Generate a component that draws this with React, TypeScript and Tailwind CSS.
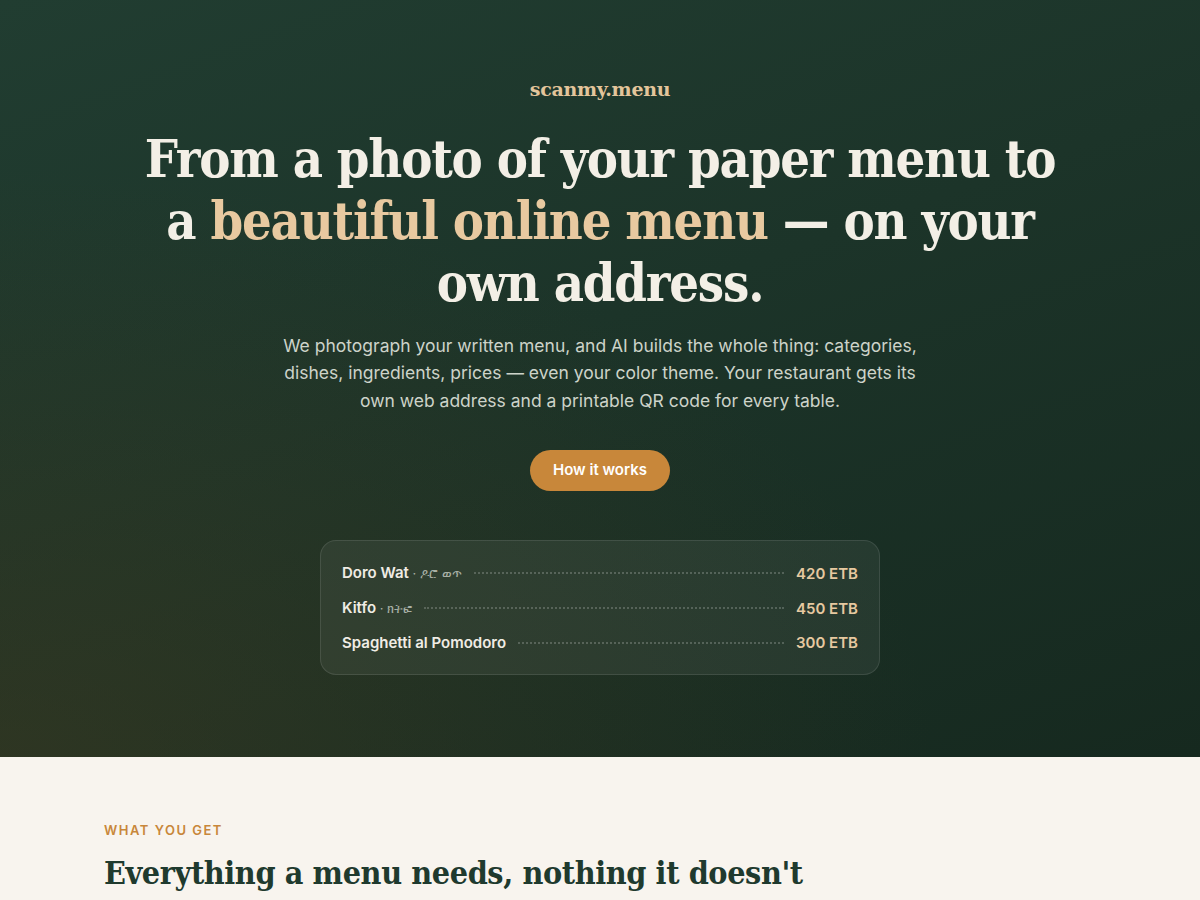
const serif = { fontFamily: '"DejaVu Serif", "Liberation Serif", serif' };
const serifNarrow = { fontFamily: '"DejaVu Serif Condensed", "DejaVu Serif", "Liberation Serif", serif' };

const items = [
  { name: 'Doro Wat', local: 'ዶሮ ወጥ', price: '420 ETB' },
  { name: 'Kitfo', local: 'ክትፎ', price: '450 ETB' },
  { name: 'Spaghetti al Pomodoro', local: '', price: '300 ETB' },
];

export default function App() {
  return (
    <div className="min-h-screen bg-[#f8f4ee] font-['Inter',sans-serif]">
      <section className="relative overflow-hidden bg-[linear-gradient(160deg,#213d31_0%,#1c3429_45%,#16291f_100%)] px-6 pt-[75px] pb-[82px]">
        <div className="pointer-events-none absolute inset-0 bg-[radial-gradient(ellipse_at_0%_100%,rgba(70,60,30,0.45),transparent_55%)]" />
        <div className="relative flex flex-col items-center text-center">
          <div style={serif} className="text-[19px] font-bold tracking-[-0.3px] text-[#e3c59b]">
            scanmy.menu
          </div>
          <h1
            style={serifNarrow}
            className="mt-[24px] max-w-[940px] text-[52px] font-bold leading-[62px] tracking-[-1.2px] text-[#f3efe6]"
          >
            From a photo of your paper menu to a{' '}
            <span className="text-[#e8c9a0]">beautiful online menu</span> — on your own address.
          </h1>
          <p className="mt-[18px] max-w-[650px] text-[17.5px] leading-[27.5px] text-[#cdd3c9]">
            We photograph your written menu, and AI builds the whole thing: categories, dishes,
            ingredients, prices — even your color theme. Your restaurant gets its own web address
            and a printable QR code for every table.
          </p>
          <a
            href="#"
            className="mt-9 flex h-[41px] items-center rounded-full bg-[#c8873a] px-[23px] text-[15px] font-semibold text-white"
          >
            How it works
          </a>
          <div className="mt-[49px] w-[560px] rounded-2xl border border-white/10 bg-white/[0.06] px-[21px] py-[21px]">
            <div className="flex flex-col gap-[13px]">
              {items.map((it) => (
                <div key={it.name} className="flex items-center gap-3 text-[15px] leading-[21px]">
                  <span className="font-semibold text-[#f0ece4]">
                    {it.name}
                    {it.local && (
                      <span className="text-[13px] font-normal text-[#a9b1a6]"> · {it.local}</span>
                    )}
                  </span>
                  <span className="h-0 flex-1 border-t-2 border-dotted border-white/20" />
                  <span className="font-semibold text-[#e6c9a0]">{it.price}</span>
                </div>
              ))}
            </div>
          </div>
        </div>
      </section>
      <section className="mx-auto max-w-[992px] px-0 pt-[64px]">
        <div className="text-[13px] font-semibold tracking-[1.5px] text-[#c8873a]">WHAT YOU GET</div>
        <h2 style={serifNarrow} className="mt-[12px] text-[32px] font-bold leading-tight tracking-[-0.4px] text-[#1f3a2e]">
          Everything a menu needs, nothing it doesn't
        </h2>
      </section>
    </div>
  );
}
